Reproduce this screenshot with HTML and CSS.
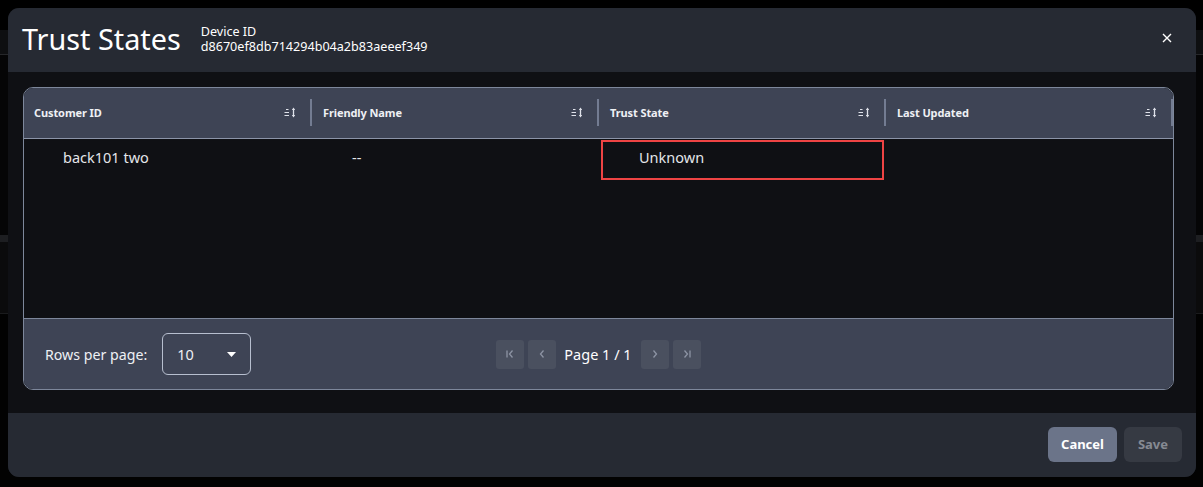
FILE: index.html
```html
<!DOCTYPE html>
<html lang="en">
<head>
<meta charset="utf-8">
<title>Trust States</title>
<link rel="stylesheet" href="styles.css">
</head>
<body>
<div class="modal">
  <header class="modal-header">
    <h1 class="modal-title">Trust States</h1>
    <div class="device">
      <div class="device-label">Device ID</div>
      <div class="device-id">d8670ef8db714294b04a2b83aeeef349</div>
    </div>
    <button class="close-btn" aria-label="Close">
      <svg width="10" height="10" viewBox="0 0 10 10"><path d="M1 1L9 9M9 1L1 9" stroke="#fff" stroke-width="1.4" fill="none"/></svg>
    </button>
  </header>

  <main class="modal-body">
    <div class="table-card">
      <div class="thead">
        <div class="th"><span class="th-label">Customer ID</span><svg class="sort" width="13" height="11" viewBox="0 0 13 11"><path d="M2 2.5H4.5M0.5 5.5H5M0.5 8.5H5" stroke="#dfe2ea" stroke-width="1.1" fill="none"/><path d="M9.5 2V9" stroke="#dfe2ea" stroke-width="1.3"/><path d="M7.8 3L9.5 0.6L11.2 3Z M7.8 8L9.5 10.4L11.2 8Z" fill="#dfe2ea"/></svg><span class="sep"></span></div>
        <div class="th"><span class="th-label">Friendly Name</span><svg class="sort" width="13" height="11" viewBox="0 0 13 11"><path d="M2 2.5H4.5M0.5 5.5H5M0.5 8.5H5" stroke="#dfe2ea" stroke-width="1.1" fill="none"/><path d="M9.5 2V9" stroke="#dfe2ea" stroke-width="1.3"/><path d="M7.8 3L9.5 0.6L11.2 3Z M7.8 8L9.5 10.4L11.2 8Z" fill="#dfe2ea"/></svg><span class="sep"></span></div>
        <div class="th"><span class="th-label">Trust State</span><svg class="sort" width="13" height="11" viewBox="0 0 13 11"><path d="M2 2.5H4.5M0.5 5.5H5M0.5 8.5H5" stroke="#dfe2ea" stroke-width="1.1" fill="none"/><path d="M9.5 2V9" stroke="#dfe2ea" stroke-width="1.3"/><path d="M7.8 3L9.5 0.6L11.2 3Z M7.8 8L9.5 10.4L11.2 8Z" fill="#dfe2ea"/></svg><span class="sep"></span></div>
        <div class="th"><span class="th-label">Last Updated</span><svg class="sort" width="13" height="11" viewBox="0 0 13 11"><path d="M2 2.5H4.5M0.5 5.5H5M0.5 8.5H5" stroke="#dfe2ea" stroke-width="1.1" fill="none"/><path d="M9.5 2V9" stroke="#dfe2ea" stroke-width="1.3"/><path d="M7.8 3L9.5 0.6L11.2 3Z M7.8 8L9.5 10.4L11.2 8Z" fill="#dfe2ea"/></svg><span class="sep"></span></div>
      </div>
      <div class="tbody">
        <div class="tr">
          <div class="td"><div class="cell">back101 two</div></div>
          <div class="td"><div class="cell">--</div></div>
          <div class="td"><div class="cell highlighted">Unknown</div></div>
          <div class="td"><div class="cell"></div></div>
        </div>
      </div>
      <div class="tfoot">
        <div class="rows-per-page">
          <span class="rpp-label">Rows per page:</span>
          <div class="select">
            <span>10</span>
            <svg width="9" height="5" viewBox="0 0 9 5"><path d="M0 0H9L4.5 5Z" fill="#fff"/></svg>
          </div>
        </div>
        <div class="pager">
          <button class="pg-btn" aria-label="First page"><svg width="10" height="10" viewBox="0 0 10 10"><path d="M2 1.5V8.5M7.5 1.5L4.5 5L7.5 8.5" stroke="#8d94a4" stroke-width="1.3" fill="none"/></svg></button>
          <button class="pg-btn" aria-label="Previous page"><svg width="10" height="10" viewBox="0 0 10 10"><path d="M6.5 1.5L3.5 5L6.5 8.5" stroke="#8d94a4" stroke-width="1.3" fill="none"/></svg></button>
          <span class="page-text">Page 1 / 1</span>
          <button class="pg-btn" aria-label="Next page"><svg width="10" height="10" viewBox="0 0 10 10"><path d="M3.5 1.5L6.5 5L3.5 8.5" stroke="#8d94a4" stroke-width="1.3" fill="none"/></svg></button>
          <button class="pg-btn" aria-label="Last page"><svg width="10" height="10" viewBox="0 0 10 10"><path d="M2.5 1.5L5.5 5L2.5 8.5M8 1.5V8.5" stroke="#8d94a4" stroke-width="1.3" fill="none"/></svg></button>
        </div>
        <div class="spacer"></div>
      </div>
    </div>
  </main>

  <footer class="modal-footer">
    <button class="btn btn-cancel">Cancel</button>
    <button class="btn btn-save" disabled>Save</button>
  </footer>
</div>
</body>
</html>
```
FILE: styles.css
```css
* { box-sizing: border-box; }

html, body { height: 100%; }

body {
  margin: 0;
  font-family: "Noto Sans", "Open Sans", sans-serif;
  color: #fff;
  background:
    linear-gradient(to bottom,
      #000 0 30px,
      #0e0f11 30px 54px,
      #26272a 54px 55px,
      #050506 55px 235px,
      #1d1e21 235px 242px,
      #0b0b0c 242px 313px,
      #1a1b1d 313px 314px,
      #020202 314px);
  padding: 8px 7px 10px 8px;
}

.modal {
  width: 1188px;
  height: 469px;
  border-radius: 11px;
  overflow: hidden;
  display: flex;
  flex-direction: column;
  background: #0f1014;
}

.modal-header {
  height: 64px;
  flex: none;
  background: #262a33;
  display: flex;
  align-items: center;
  padding: 0 24px 0 14px;
}

.modal-title {
  margin: 0 20px 0 0;
  font-size: 28.8px;
  font-weight: 400;
  line-height: 1;
  color: #fff;
  position: relative;
  top: -1px;
}

.device {
  display: flex;
  flex-direction: column;
  font-size: 12.6px;
  line-height: 15px;
  position: relative;
  top: -1px;
}

.close-btn {
  margin-left: auto;
  background: none;
  border: 0;
  padding: 0;
  width: 10px;
  height: 10px;
  display: flex;
  cursor: pointer;
  position: relative;
  top: -2px;
}

.modal-body {
  flex: none;
  height: 341px;
  padding: 15px 22px 23px 15px;
  background: #0f1014;
}

.table-card {
  height: 100%;
  border: 1px solid #7d879b;
  border-radius: 10px;
  overflow: hidden;
  display: flex;
  flex-direction: column;
  background: #0f1014;
}

.thead {
  height: 51px;
  flex: none;
  background: #3e4455;
  border-bottom: 1px solid #8b94a8;
  display: flex;
  padding-left: 1px;
  padding-bottom: 1px;
}

.th {
  width: 287px;
  flex: none;
  display: flex;
  align-items: center;
  padding-left: 9px;
  font-size: 11px;
  font-weight: 700;
  color: #eef0f4;
  letter-spacing: -0.1px;
}

.th + .th { padding-left: 11px; }

.th-label { flex: 1; }

.sort { flex: none; margin-right: 13px; }

.sep {
  width: 2px;
  height: 27px;
  background: #737c92;
  flex: none;
}

.tbody {
  flex: 1;
  background: #0f1014;
}

.tr {
  display: flex;
  height: 42px;
}

.td {
  width: 287px;
  flex: none;
  padding: 1px 1px 1px 3px;
}

.cell {
  height: 40px;
  border: 2px solid transparent;
  padding-left: 34px;
  display: flex;
  align-items: center;
  font-size: 14.5px;
  color: #e4e6ea;
  position: relative;
  top: -3px;
}

.td + .td .cell { padding-left: 36px; }

.cell.highlighted {
  border-color: #ee4444;
  top: 0;
  padding-bottom: 6px;
}

.tfoot {
  height: 71px;
  flex: none;
  background: #3e4455;
  border-top: 1px solid #7d879b;
  display: grid;
  grid-template-columns: 1fr auto 1fr;
  align-items: center;
  padding-left: 21px;
}

.rows-per-page {
  display: flex;
  align-items: center;
  gap: 15px;
}

.rpp-label {
  font-size: 14.2px;
  color: #eef0f4;
}

.select {
  width: 89px;
  height: 42px;
  border: 1px solid #b7bfcf;
  border-radius: 6px;
  display: flex;
  align-items: center;
  justify-content: space-between;
  padding: 0 14px 0 14px;
  font-size: 14.5px;
  color: #eef0f4;
}

.pager {
  display: flex;
  align-items: center;
  gap: 4px;
  margin-left: -21px;
}

.pg-btn {
  width: 28px;
  height: 29px;
  border: 0;
  border-radius: 3px;
  background: #4a505f;
  display: flex;
  align-items: center;
  justify-content: center;
  padding: 0;
}

.page-text {
  font-size: 14.5px;
  color: #fff;
  margin: 0 5px 0 4px;
}

.modal-footer {
  flex: 1;
  background: #262a33;
  display: flex;
  align-items: center;
  justify-content: flex-end;
  gap: 7px;
  padding: 0 14px 2px 0;
}

.btn {
  height: 35px;
  border: 0;
  border-radius: 6px;
  font-family: "Noto Sans", "Open Sans", sans-serif;
  font-size: 13px;
  font-weight: 700;
  padding: 0;
}

.btn-cancel {
  width: 69px;
  background: #6b7489;
  color: #fff;
}

.btn-save {
  width: 58px;
  background: #363a43;
  color: #868a93;
}
```
